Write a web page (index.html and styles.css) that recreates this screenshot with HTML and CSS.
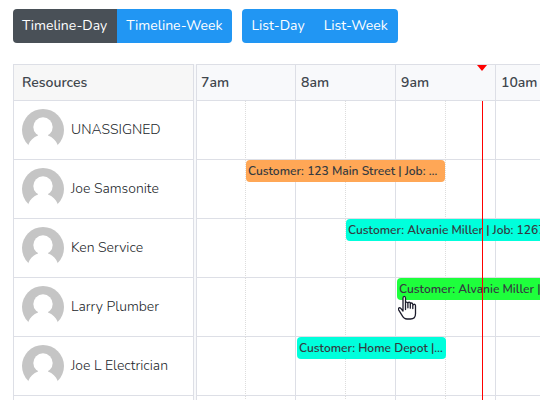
FILE: index.html
```html
<!DOCTYPE html>
<html lang="en">
<head>
  <meta charset="UTF-8">
  <meta name="viewport" content="width=device-width, initial-scale=1">
  <title>Schedule</title>
  <link rel="stylesheet" href="styles.css">
</head>
<body>
  <svg class="sprite" aria-hidden="true">
    <symbol id="person" viewBox="0 0 42 42">
      <circle cx="21" cy="21" r="21" fill="#c5c5c5"/>
      <circle cx="21" cy="18" r="9.700" fill="#fff"/>
      <path d="M16 24v2.500C11.500 28 8 31.500 6.300 36V42h29.400v-6C34 31.500 30.500 28 26 26.500V24z" fill="#fff"/>
    </symbol>
  </svg>

  <div class="toolbar">
    <div class="btn-group">
      <button type="button" class="active">Timeline-Day</button>
      <button type="button">Timeline-Week</button>
    </div>
    <div class="btn-group">
      <button type="button">List-Day</button>
      <button type="button">List-Week</button>
    </div>
  </div>

  <div class="schedule">
    <table>
      <colgroup>
        <col class="col-resource">
        <col class="col-divider">
        <col span="8" class="col-slot">
      </colgroup>
      <thead>
        <tr>
          <th class="resource" scope="col">Resources</th>
          <td class="divider"></td>
          <th class="hour" scope="col" colspan="2">7am</th>
          <th class="hour" scope="col" colspan="2">8am</th>
          <th class="hour" scope="col" colspan="2">9am</th>
          <th class="hour" scope="col" colspan="2">10am</th>
        </tr>
      </thead>
      <tbody>
        <tr>
          <th class="resource" scope="row"><div><svg class="avatar"><use href="#person"/></svg>UNASSIGNED</div></th>
          <td class="divider"></td>
          <td class="slot"></td><td class="slot half"></td>
          <td class="slot"></td><td class="slot half"></td>
          <td class="slot"></td><td class="slot half"></td>
          <td class="slot"></td><td class="slot half"></td>
        </tr>
        <tr>
          <th class="resource" scope="row"><div><svg class="avatar"><use href="#person"/></svg>Joe Samsonite</div></th>
          <td class="divider"></td>
          <td class="slot"></td>
          <td class="slot half"><a href="#" class="event orange span-4">Customer: 123 Main Street | Job: 1265</a></td>
          <td class="slot"></td><td class="slot half"></td>
          <td class="slot"></td><td class="slot half"></td>
          <td class="slot"></td><td class="slot half"></td>
        </tr>
        <tr>
          <th class="resource" scope="row"><div><svg class="avatar"><use href="#person"/></svg>Ken Service</div></th>
          <td class="divider"></td>
          <td class="slot"></td><td class="slot half"></td>
          <td class="slot"></td>
          <td class="slot half"><a href="#" class="event aqua span-6">Customer: Alvanie Miller | Job: 1267</a></td>
          <td class="slot"></td><td class="slot half"></td>
          <td class="slot"></td><td class="slot half"></td>
        </tr>
        <tr>
          <th class="resource" scope="row"><div><svg class="avatar"><use href="#person"/></svg>Larry Plumber</div></th>
          <td class="divider"></td>
          <td class="slot"></td><td class="slot half"></td>
          <td class="slot"></td><td class="slot half"></td>
          <td class="slot">
            <a href="#" class="event green span-6">Customer: Alvanie Miller | Job: 1268</a>
            <svg class="pointer" viewBox="0 0 20 25" aria-hidden="true">
              <path d="M7.500 14.500V3.300C7.500.7 5 .7 5 3.300V16L2.800 13.400C1.400 11.900-.3 13.300.8 15.200L4.500 21.200C5.500 23 7 24 9 24h3.500c3.300 0 5-2.300 5-5.300V11c0-2.400-2.700-2.200-2.700 0V9.700c0-2.300-2.500-2.200-2.500 0V8.800c0-2.300-2.400-2.200-2.400 0M9.900 8.800C9.900 6.500 7.500 6.500 7.500 8.500M9.900 8.800v4M12.300 9.700v3.500M14.800 11v2.500" fill="#fff" stroke="#1b1b2b" stroke-width="1.300" stroke-linejoin="round" stroke-linecap="round"/>
            </svg>
          </td>
          <td class="slot half"></td>
          <td class="slot"></td><td class="slot half"></td>
        </tr>
        <tr>
          <th class="resource" scope="row"><div><svg class="avatar"><use href="#person"/></svg>Joe L Electrician</div></th>
          <td class="divider"></td>
          <td class="slot"></td><td class="slot half"></td>
          <td class="slot"><a href="#" class="event aqua span-3">Customer: Home Depot | Job: 1266</a></td>
          <td class="slot half"></td>
          <td class="slot"></td><td class="slot half"></td>
          <td class="slot"></td><td class="slot half"></td>
        </tr>
        <tr>
          <th class="resource" scope="row"></th>
          <td class="divider"></td>
          <td class="slot"></td><td class="slot half"></td>
          <td class="slot"></td><td class="slot half"></td>
          <td class="slot"></td><td class="slot half"></td>
          <td class="slot"></td><td class="slot half"></td>
        </tr>
      </tbody>
    </table>
    <div class="now"></div>
  </div>
</body>
</html>
```
FILE: styles.css
```css
* {
  box-sizing: border-box;
}

body {
  margin: 0;
  padding: 9px 0 0 13px;
  height: 100vh;
  overflow: hidden;
  background: #fff;
  color: #3f464d;
  font-family: Nunito, Lato, sans-serif;
  font-size: 14px;
  line-height: 18px;
}

.sprite {
  position: absolute;
  width: 0;
  height: 0;
}

.toolbar {
  display: flex;
  gap: 10px;
  margin-bottom: 21px;
}

.btn-group {
  display: flex;
  border-radius: 4px;
  overflow: hidden;
}

.btn-group button {
  height: 34px;
  padding: 0 10px 1px 9px;
  border: none;
  background: #2196f3;
  color: #fff;
  font: inherit;
  cursor: pointer;
}

.btn-group .active {
  background: #495057;
}

.schedule {
  position: relative;
  overflow: hidden;
}

table {
  width: 583px;
  table-layout: fixed;
  border-collapse: separate;
  border-spacing: 0;
}

.col-resource {
  width: 181px;
}

.col-divider {
  width: 2px;
}

.col-slot {
  width: 50px;
}

th, td {
  height: 59px;
  padding: 0;
  border-bottom: 1px solid #dddfe6;
  text-align: left;
  font-weight: 300;
}

thead th, thead td {
  height: 37px;
  border-top: 1px solid #dddfe6;
  background: #f8f9fb;
  font-weight: 600;
}

.resource {
  padding-left: 8px;
  border-left: 1px solid #dddfe6;
  border-right: 1px solid #dddfe6;
}

thead .resource {
  background: #f7f7f7;
}

.resource div {
  display: flex;
  align-items: center;
  gap: 7px;
  color: #212529;
}

.avatar {
  width: 42px;
  height: 42px;
}

.divider,
thead .divider {
  border-top: none;
  border-bottom: none;
  background: #f8f9fb;
}

.hour {
  padding-left: 5px;
  border-right: 1px solid #dddfe6;
}

.slot {
  position: relative;
  vertical-align: top;
  border-right: 1px dotted #dddddd;
}

.half {
  border-right: 1px solid #dddfe6;
}

.divider + .slot,
.divider + .hour {
  border-left: 1px solid #dddfe6;
}

.divider + .hour {
  padding-left: 4px;
}

.event {
  position: absolute;
  top: 0;
  left: 1px;
  z-index: 1;
  height: 22px;
  padding: 0 2px;
  border-radius: 4px;
  overflow: hidden;
  white-space: nowrap;
  text-overflow: ellipsis;
  color: #343a40;
  font-size: 12px;
  font-weight: 600;
  line-height: 22px;
  text-decoration: none;
}

.half .event {
  left: 0;
}

.span-3 {
  width: 149px;
}

.span-4 {
  width: 199px;
}

.span-6 {
  width: 299px;
}

.orange {
  background: #ffa756;
}

.aqua {
  background: #00ffdc;
}

.green {
  background: #1eff3c;
}

/* current time marker */
.now {
  position: absolute;
  top: 37px;
  bottom: 0;
  left: 469px;
  z-index: 2;
  width: 1px;
  background: #f00;
}

.now::before {
  content: "";
  position: absolute;
  top: -36px;
  left: -5px;
  border: 5px solid transparent;
  border-top: 6px solid #f00;
  border-bottom: none;
}

.pointer {
  position: absolute;
  top: 17px;
  left: 2px;
  z-index: 3;
  width: 20px;
  height: 25px;
}
```
